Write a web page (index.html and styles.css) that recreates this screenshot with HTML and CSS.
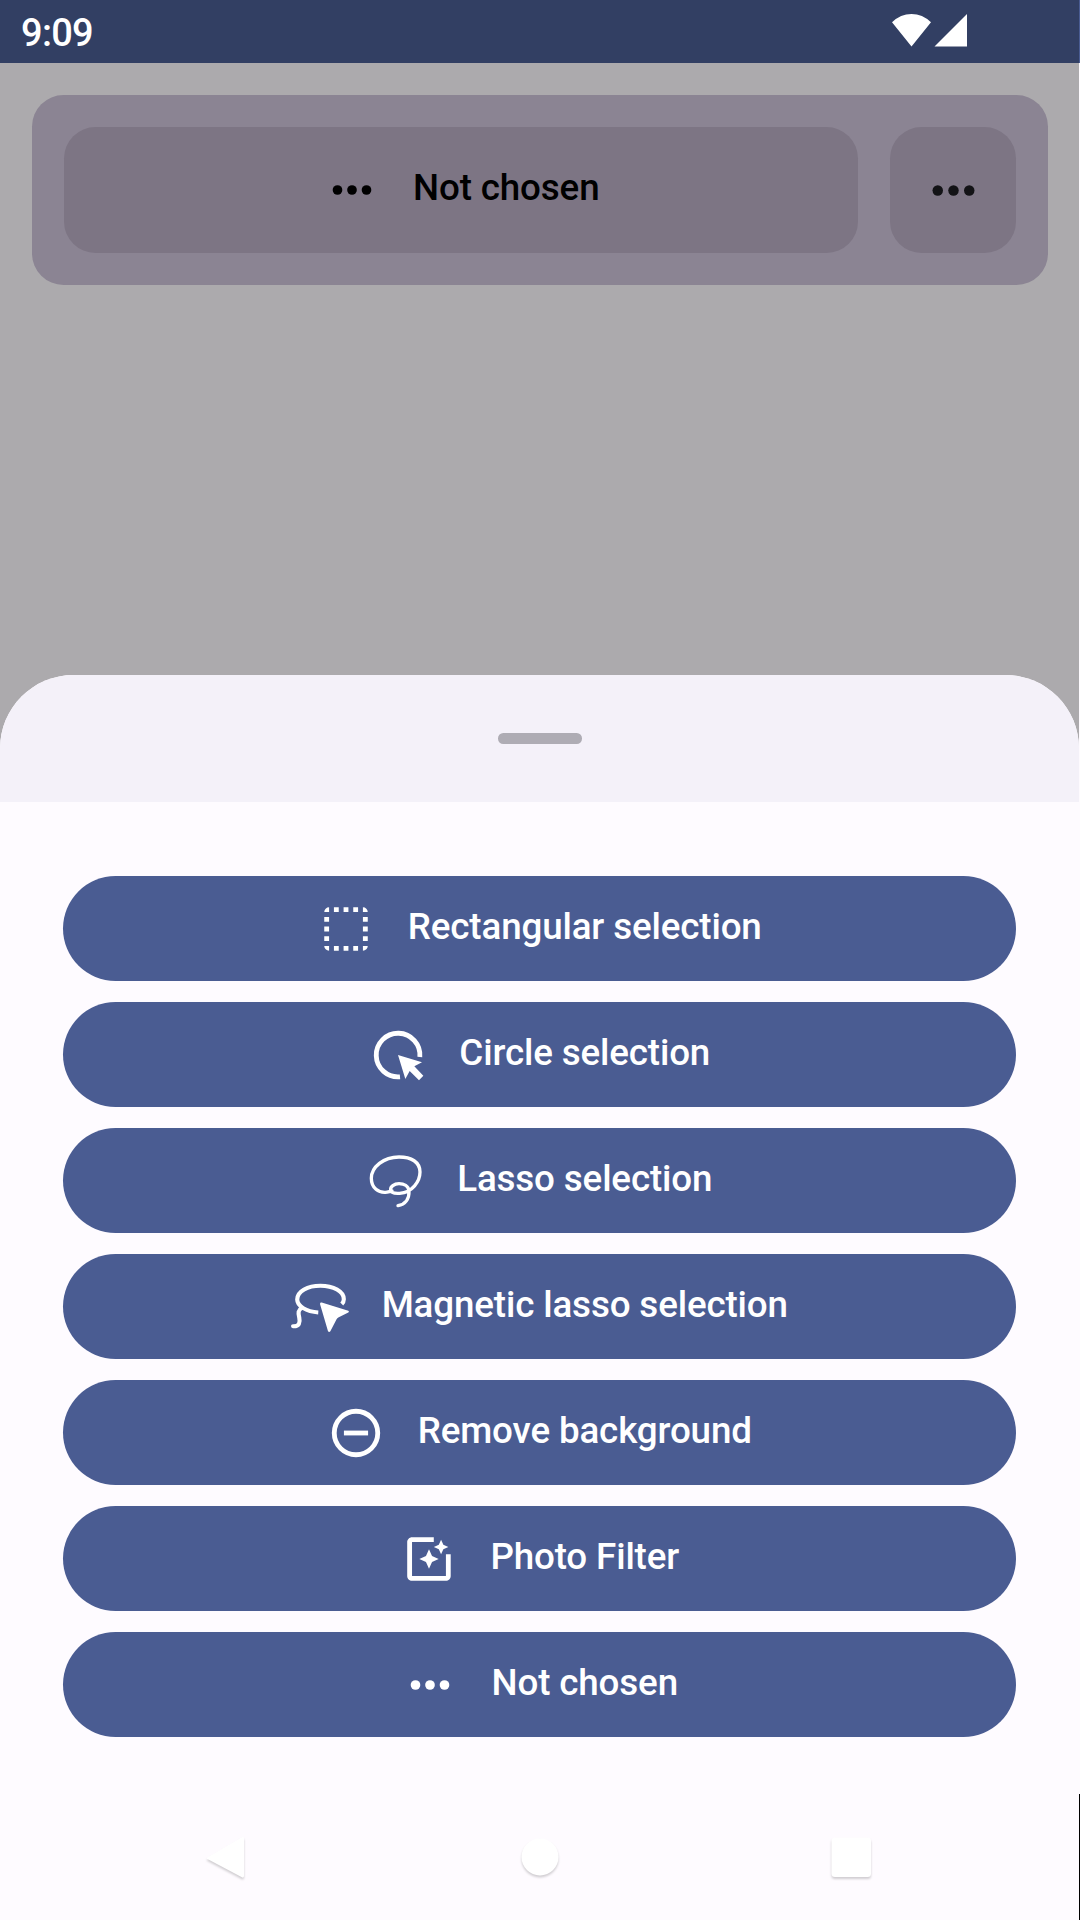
FILE: index.html
```html
<!DOCTYPE html>
<html lang="en">
<head>
<meta charset="utf-8">
<title>Selection tools</title>
<link rel="stylesheet" href="styles.css">
</head>
<body>
<div class="screen">
  <header class="status">
    <span class="clock">9:09</span>
    <svg class="signals" width="76" height="34" viewBox="0 0 76 34" fill="#fff"><path d="M0 9.3Q8.5 1 19.500 1T39 9.300L19.500 33.500ZM42.500 33.500L75 1V33.500Z"/></svg>
  </header>

  <section class="toolbar">
    <div class="tool tool-wide">
      <svg class="icon" viewBox="0 0 24 24"><circle cx="6" cy="12" r="2"/><circle cx="12" cy="12" r="2"/><circle cx="18" cy="12" r="2"/></svg>
      <span class="label">Not chosen</span>
    </div>
    <div class="tool tool-more">
      <svg class="icon icon-more" viewBox="0 0 24 24"><circle cx="6" cy="12" r="2"/><circle cx="12" cy="12" r="2"/><circle cx="18" cy="12" r="2"/></svg>
    </div>
  </section>

  <main class="sheet">
    <div class="sheet-head"><span class="handle"></span></div>
    <div class="options">
      <button class="option">
        <svg class="icon" viewBox="0 0 24 24"><path d="M5 3v2H3a2 2 0 0 1 2-2zM7 3h2v2H7zM11 3h2v2h-2zM15 3h2v2h-2zM19 3a2 2 0 0 1 2 2h-2zM3 7h2v2H3zM3 11h2v2H3zM3 15h2v2H3zM19 7h2v2h-2zM19 11h2v2h-2zM19 15h2v2h-2zM5 19v2a2 2 0 0 1-2-2zM7 19h2v2H7zM11 19h2v2h-2zM15 19h2v2h-2zM19 19h2a2 2 0 0 1-2 2z"/></svg>
        <span class="label">Rectangular selection</span>
      </button>
      <button class="option">
        <svg class="icon" viewBox="54 78 174 174"><path class="line" stroke-width="14.500" d="M206.500 171A65.500 65.500 0 1 0 147 230.500"/><path d="M141 165L213 187L190 199L217 227L204 241L176 213L163 237Z"/></svg>
        <span class="label">Circle selection</span>
      </button>
      <button class="option">
        <svg class="icon" viewBox="52 65 174 174"><path class="line" stroke-width="10" stroke-linecap="round" d="M145 226C166 222 179 207 178 183C177 167 162 160 148 160C133 160 122 169 123 178C124 187 136 190 150 189C188 186 211 153 211 125C211 95 185 80 148 80C102 80 65 110 65 144C65 175 88 187 107 186C115 186 120 183 127 182"/></svg>
        <span class="label">Lasso selection</span>
      </button>
      <button class="option">
        <svg class="icon" viewBox="61 82 168 172" preserveAspectRatio="none"><path class="line" stroke-width="12" d="M140 184C105 182 79 165 79 146C79 121 110 105 146 105C184 105 214 122 214 145C214 150 212 155 208 159"/><path class="line" stroke-width="12" stroke-linecap="round" d="M67 225C85 226 88 214 85 200C81 184 82 177 92 171"/><path d="M145 159Q145 154 150 155L227 179Q231 182 227 184L198 199Q195 201 193 204L175 240Q171 245 168 239Z"/></svg>
        <span class="label">Magnetic lasso selection</span>
      </button>
      <button class="option">
        <svg class="icon" viewBox="0 0 24 24"><circle class="line" cx="12" cy="12" r="9" stroke-width="2"/><path d="M7 11h10v2H7z"/></svg>
        <span class="label">Remove background</span>
      </button>
      <button class="option">
        <svg class="icon" viewBox="0 0 24 24"><path d="M19 10v9H4.980V5h9V3H4.980c-1.100 0-2 .9-2 2v14c0 1.100.9 2 2 2h14c1.100 0 2-.9 2-2v-9zM16.060 7.940L17 10l.94-2.060L20 7l-2.060-.94L17 4l-.94 2.060L14 7zM12 8l-1.250 2.750L8 12l2.750 1.250L12 16l1.250-2.750L16 12l-2.750-1.250z"/></svg>
        <span class="label">Photo Filter</span>
      </button>
      <button class="option">
        <svg class="icon" viewBox="0 0 24 24"><circle cx="6" cy="12" r="2"/><circle cx="12" cy="12" r="2"/><circle cx="18" cy="12" r="2"/></svg>
        <span class="label">Not chosen</span>
      </button>
    </div>
    <nav class="nav">
      <svg class="nav-icon" viewBox="0 0 48 48"><path d="M6.500 24.500L40.500 4.500Q43 3 43 6V42.500Q43 45.500 40.500 44L6.500 26Q5 25.200 6.500 24.500Z"/></svg>
      <svg class="nav-icon" viewBox="0 0 48 48"><circle cx="26" cy="24" r="18.500"/></svg>
      <svg class="nav-icon" viewBox="0 0 48 48"><rect x="4.500" y="4.500" width="39.500" height="39.500" rx="3.500"/></svg>
    </nav>
  </main>
  <div class="edge"></div>
</div>
</body>
</html>
```
FILE: styles.css
```css
* { box-sizing: border-box; }
body {
  margin: 0;
  font-family: Roboto, "Noto Sans", sans-serif;
  font-weight: 500;
}
.screen {
  position: relative;
  display: flex;
  flex-direction: column;
  width: 1080px;
  height: 1920px;
  overflow: hidden;
  background: #acaaad;
}
.status {
  display: flex;
  flex: none;
  justify-content: space-between;
  height: 63px;
  padding: 13px 112px 0 21px;
  background: #323f63;
  color: #fff;
}
.clock { font-size: 38px; line-height: 40px; letter-spacing: -0.7px; }
.toolbar {
  display: flex;
  gap: 32px;
  margin: 32px 32px 0;
  padding: 32px;
  border-radius: 31.5px;
  background: #8b8493;
}
.tool {
  display: flex;
  align-items: center;
  justify-content: center;
  gap: 32.5px;
  height: 126px;
  border-radius: 31.5px;
  background: #7d7584;
  color: #000;
}
.tool-wide { flex: 1; }
.tool-more { width: 126px; color: #131316; }
.icon {
  flex: none;
  width: 58px;
  height: 58px;
  fill: currentColor;
  overflow: visible;
}
.icon-more { width: 63px; height: 63px; }
.line { fill: none; stroke: currentColor; }
.label {
  padding-bottom: 4px;
  font-size: 36.75px;
  line-height: 52px;
  letter-spacing: -0.14px;
  white-space: nowrap;
}
.sheet {
  display: flex;
  flex-direction: column;
  width: 1079px;
  height: 1245px;
  margin-top: auto;
  overflow: hidden;
  border-radius: 73.5px 73.5px 0 0;
  background: #fefbff;
}
.sheet-head {
  display: flex;
  align-items: center;
  justify-content: center;
  height: 127px;
  background: #f4f1f9;
}
.handle {
  width: 84px;
  height: 11px;
  border-radius: 5.25px;
  background: #aeacb4;
}
.options {
  display: flex;
  flex-direction: column;
  gap: 21px;
  padding: 74px 63px 0;
}
.option {
  display: flex;
  align-items: center;
  justify-content: center;
  gap: 32.5px;
  height: 105px;
  padding: 0;
  border: 0;
  border-radius: 52.5px;
  background: #4a5c92;
  color: #fff;
  font: inherit;
}
.nav {
  display: flex;
  justify-content: space-between;
  margin-top: auto;
  padding: 0 204px 39px 201px;
}
.nav-icon {
  width: 48px;
  height: 48px;
  fill: #fff;
  filter: drop-shadow(0 2.5px 1px rgba(0, 0, 0, 0.18));
  overflow: visible;
}
.edge {
  position: absolute;
  top: 0;
  right: 0;
  width: 1px;
  height: 1920px;
  background: linear-gradient(#4a5c92 63px, #fefbff 63px 1794px, #000 1794px);
}
```
